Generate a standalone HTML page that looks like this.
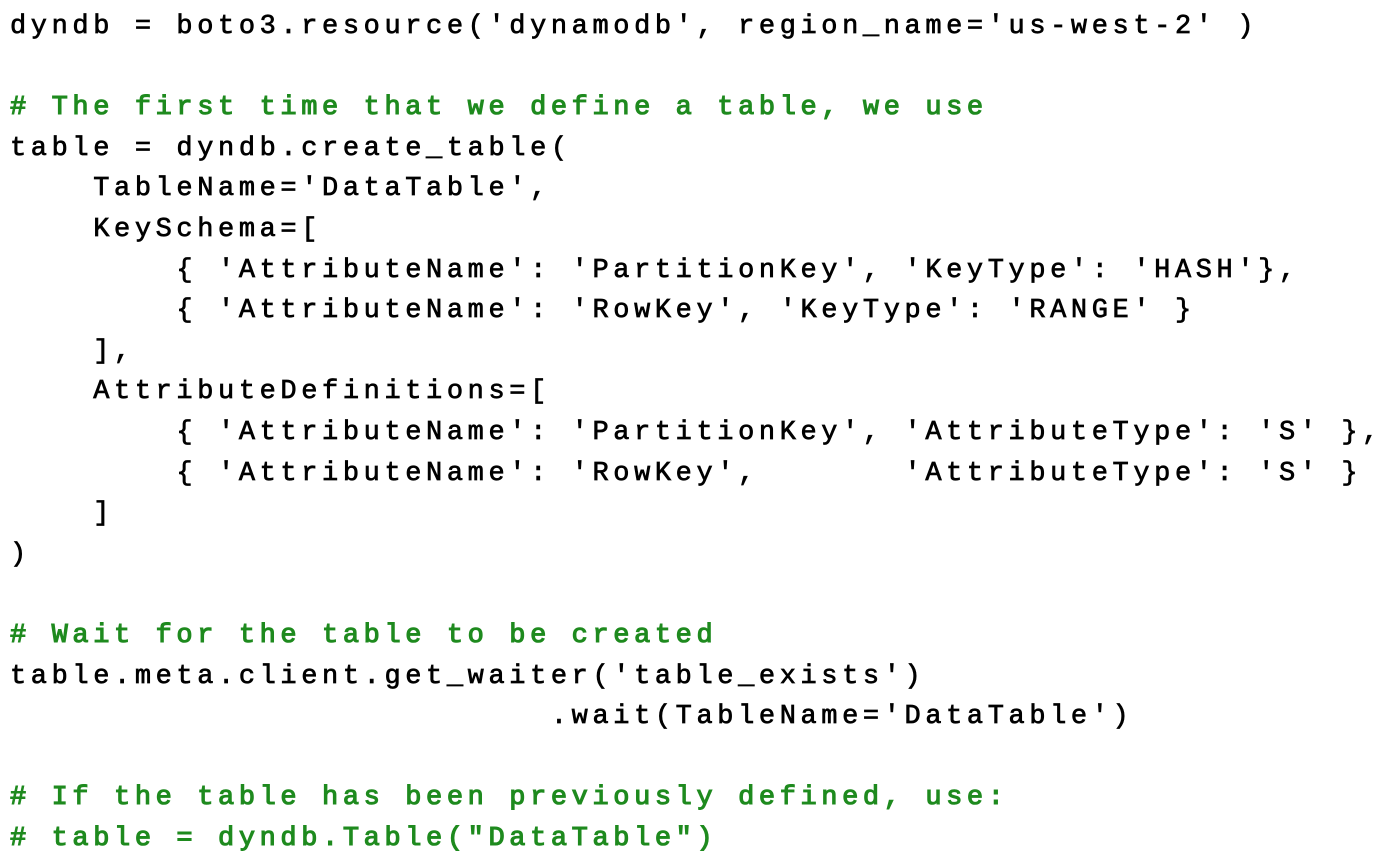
<!DOCTYPE html>
<html><head><meta charset="utf-8"><style>
html,body{margin:0;padding:0;background:#fff;width:1392px;height:853px;overflow:hidden}
pre{margin:0;padding:7px 0 0 10px;font-family:"Liberation Mono",monospace;font-size:27px;letter-spacing:4.6px;line-height:40.6px;color:#000;-webkit-text-stroke:0.7px #000}
.c{color:#1e8a1e;-webkit-text-stroke:1.1px #1e8a1e}
</style></head><body><pre>dyndb = boto3.resource('dynamodb', region_name='us-west-2' )

<span class="c"># The first time that we define a table, we use</span>
table = dyndb.create_table(
    TableName='DataTable',
    KeySchema=[
        { 'AttributeName': 'PartitionKey', 'KeyType': 'HASH'},
        { 'AttributeName': 'RowKey', 'KeyType': 'RANGE' }
    ],
    AttributeDefinitions=[
        { 'AttributeName': 'PartitionKey', 'AttributeType': 'S' },
        { 'AttributeName': 'RowKey',       'AttributeType': 'S' }
    ]
)

<span class="c"># Wait for the table to be created</span>
table.meta.client.get_waiter('table_exists')
                          .wait(TableName='DataTable')

<span class="c"># If the table has been previously defined, use:</span>
<span class="c"># table = dyndb.Table("DataTable")</span></pre></body></html>
